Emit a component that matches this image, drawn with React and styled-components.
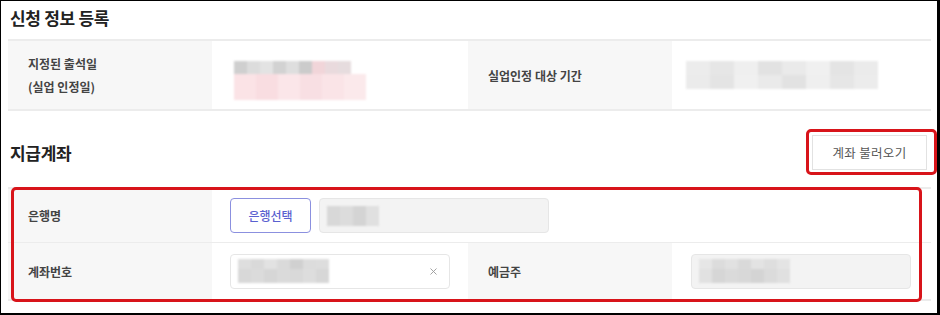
import React from "react";
import styled, { createGlobalStyle } from "styled-components";
import { X } from "lucide-react";

const GlobalStyle = createGlobalStyle`
  html, body {
    margin: 0;
    padding: 0;
    background: #fff;
  }
  body {
    font-family: "Noto Sans CJK KR", "Noto Sans", sans-serif;
    color: #333;
  }
  * {
    box-sizing: border-box;
  }
`;

const Frame = styled.div`
  width: 940px;
  height: 315px;
  border-style: solid;
  border-color: #000;
  border-width: 1px 3px 2px 1px;
  background: #fff;
  overflow: hidden;
`;

const SectionTitle = styled.h2`
  margin: 0;
  font-size: 17px;
  font-weight: 700;
  color: #222;
  letter-spacing: -0.3px;
  line-height: 1;
`;

const TopHead = styled.div`
  height: 38px;
  padding: 8px 0 0 9px;
`;

const Table = styled.div`
  position: relative;
  margin: 0 6px 0 7px;
  display: grid;
  grid-template-columns: 204px 256px 204px 1fr;
  border-top: 2px solid #ececec;
  border-bottom: 2px solid #ececec;
`;

const Row = styled.div`
  display: contents;
`;

const Label = styled.div`
  background: #f7f7f7;
  min-height: ${(p) => p.$h}px;
  padding-left: 20px;
  display: flex;
  flex-direction: column;
  justify-content: center;
  gap: 6px;
  font-size: 12px;
  font-weight: 700;
  color: #444;
  border-top: ${(p) => (p.$divider ? "1px solid #ececec" : "none")};
`;

const Value = styled.div`
  grid-column: ${(p) => p.$span || "auto"};
  display: flex;
  align-items: center;
  gap: 8px;
  padding-left: ${(p) => p.$pad || 18}px;
  padding-top: ${(p) => p.$top || 0}px;
  border-top: ${(p) => (p.$divider ? "1px solid #ececec" : "none")};
`;

const Mosaic = styled.div`
  display: flex;
  flex-direction: column;
  filter: blur(1.2px);
`;

const MosaicRow = styled.div`
  display: flex;
  height: ${(p) => p.$h}px;
`;

const Cell = styled.div`
  width: ${(p) => p.$w}px;
  background: ${(p) => p.$c};
`;

const PayHead = styled.div`
  display: flex;
  align-items: center;
  justify-content: space-between;
  padding: 24px 10px 17px 9px;
`;

const Annotated = styled.div`
  position: relative;
`;

const RedMark = styled.div`
  position: absolute;
  left: ${(p) => p.$l}px;
  right: ${(p) => p.$r}px;
  top: ${(p) => p.$t}px;
  bottom: ${(p) => p.$b}px;
  border: 3px solid #d8141a;
  border-radius: 5px;
  pointer-events: none;
`;

const LoadButton = styled.button`
  width: 115px;
  height: 35px;
  background: #fff;
  border: 1px solid #e2e2e2;
  font-family: inherit;
  font-size: 12.5px;
  color: #555;
  letter-spacing: 0.3px;
`;

const BankButton = styled.button`
  width: 81px;
  height: 35px;
  background: #fff;
  border: 1px solid #8b90df;
  border-radius: 4px;
  font-family: inherit;
  font-size: 12px;
  font-weight: 500;
  color: #5a61d0;
`;

const Field = styled.div`
  width: ${(p) => p.$w}px;
  height: 35px;
  border: 1px solid #e6e6e6;
  border-radius: 4px;
  background: ${(p) => (p.$filled ? "#f3f3f3" : "#fff")};
  display: flex;
  align-items: center;
  justify-content: space-between;
  padding: 0 10px 0 7px;
  color: #999;
`;

const grays = ["#cfcfcf", "#dcdcdc", "#e3e3e3", "#d2d2d2", "#dedede", "#cbcbcb", "#f1d5d9", "#e9dadd"];
const pinks = ["#fbe3e6", "#f9dde1", "#fbe6e9", "#f8dfe3", "#fae4e7", "#fbe9eb"];
const lights = ["#ececec", "#e6e6e6", "#efefef", "#e2e2e2", "#eaeaea", "#f0f0f0", "#e4e4e4", "#ebebeb"];

function Blur({ rows }) {
  return (
    <Mosaic>
      {rows.map((r, i) => (
        <MosaicRow key={i} $h={r.h}>
          {r.cells.map((c, j) => (
            <Cell key={j} $w={r.w} $c={c} />
          ))}
        </MosaicRow>
      ))}
    </Mosaic>
  );
}

export default function App() {
  return (
    <>
      <GlobalStyle />
      <Frame>
        <TopHead>
          <SectionTitle>신청 정보 등록</SectionTitle>
        </TopHead>
        <Table>
          <Row>
            <Label $h={68}>
              <span>지정된 출석일</span>
              <span>(실업 인정일)</span>
            </Label>
            <Value $pad={22} $top={10}>
              <Blur
                rows={[
                  { h: 13, w: 13, cells: grays.concat(["#e6dcde"]) },
                  { h: 26, w: 22, cells: pinks },
                ]}
              />
            </Value>
            <Label $h={68}>실업인정 대상 기간</Label>
            <Value $pad={14}>
              <Blur
                rows={[
                  { h: 14, w: 24, cells: lights },
                  { h: 14, w: 24, cells: lights.slice().reverse() },
                ]}
              />
            </Value>
          </Row>
        </Table>

        <PayHead>
          <SectionTitle>지급계좌</SectionTitle>
          <Annotated>
            <LoadButton>계좌 불러오기</LoadButton>
            <RedMark $l={-6} $r={-10} $t={-6} $b={-5} />
          </Annotated>
        </PayHead>

        <Table>
          <Row>
            <Label $h={53}>은행명</Label>
            <Value $span="2 / 5">
              <BankButton>은행선택</BankButton>
              <Field $w={230} $filled>
                <Blur rows={[{ h: 20, w: 13, cells: ["#d8d8d8", "#dcdcdc", "#d4d4d4", "#e0e0e0"] }]} />
              </Field>
            </Value>
          </Row>
          <Row>
            <Label $h={57} $divider>계좌번호</Label>
            <Value $divider>
              <Field $w={220}>
                <Blur
                  rows={[
                    { h: 10, w: 13, cells: ["#dedede", "#d9d9d9", "#e2e2e2", "#dadada", "#d0d0d0", "#dcdcdc", "#dddddd"] },
                    { h: 14, w: 13, cells: ["#d8d8d8", "#dbdbdb", "#d6d6d6", "#dadada", "#d9d9d9", "#dddddd", "#d7d7d7"] },
                  ]}
                />
                <X size={11} strokeWidth={2} color="#9a9a9a" />
              </Field>
            </Value>
            <Label $h={57} $divider>예금주</Label>
            <Value $divider $pad={19}>
              <Field $w={220} $filled>
                <Blur
                  rows={[
                    { h: 10, w: 13, cells: ["#e6e6e6", "#dcdcdc", "#e1e1e1", "#d9d9d9", "#e3e3e3", "#dedede", "#e4e4e4"] },
                    { h: 14, w: 13, cells: ["#e1e1e1", "#d6d6d6", "#dadada", "#d8d8d8", "#d4d4d4", "#dbdbdb", "#e0e0e0"] },
                  ]}
                />
              </Field>
            </Value>
          </Row>
          <RedMark $l={3} $r={9} $t={-2} $b={-3} />
        </Table>
      </Frame>
    </>
  );
}
